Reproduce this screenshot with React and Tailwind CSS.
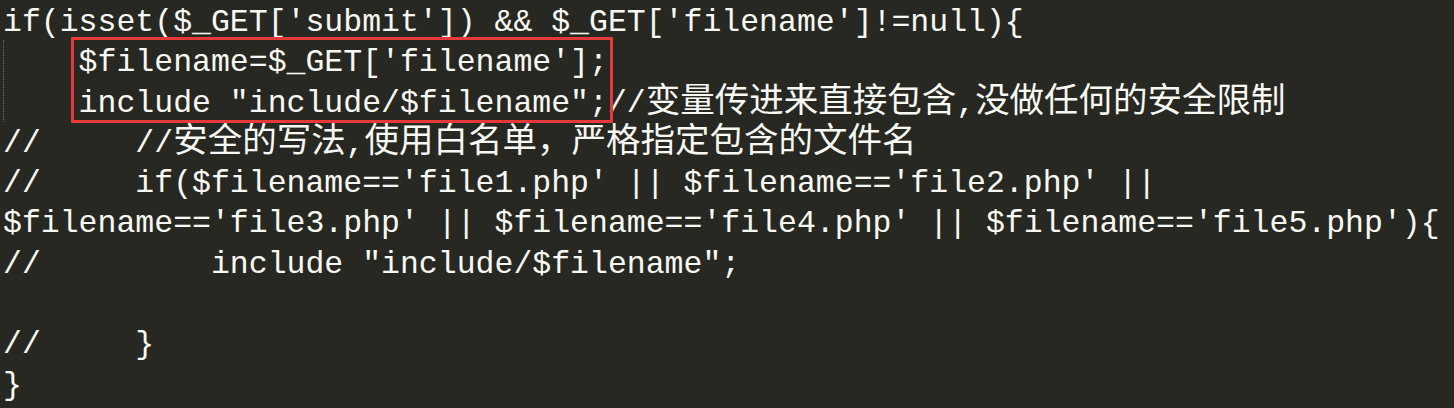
const mono = "font-['Liberation_Mono',monospace] text-[31.5px]"
const cjk = "font-['Noto_Sans_CJK_SC',sans-serif] text-[34.5px] leading-[0px]"

const lines = [
  [{ t: "if(isset($_GET['submit']) && $_GET['filename']!=null){" }],
  [{ t: "    $filename=$_GET['filename'];" }],
  [
    { t: '    include "include/$filename";//' },
    { t: '变量传进来直接包含', c: true },
    { t: ',' },
    { t: '没做任何的安全限制', c: true },
  ],
  [
    { t: '//     //' },
    { t: '安全的写法', c: true },
    { t: ',' },
    { t: '使用白名单，严格指定包含的文件名', c: true },
  ],
  [{ t: "//     if($filename=='file1.php' || $filename=='file2.php' ||" }],
  [{ t: "$filename=='file3.php' || $filename=='file4.php' || $filename=='file5.php'){" }],
  [{ t: '//         include "include/$filename";' }],
  [{ t: '' }],
  [{ t: '//     }' }],
  [{ t: '}' }],
]

export default function App() {
  return (
    <div className="w-[1454px] h-[408px] bg-[#272822] overflow-hidden">
      <div className={`relative pl-[3px] pt-[3px] text-[#f8f8f2] ${mono}`}>
        {lines.map((parts, i) => (
          <div key={i} className="h-[40.3px] leading-[40.3px] whitespace-pre">
            {parts.map((p, j) =>
              p.c ? (
                <span key={j} className={cjk}>{p.t}</span>
              ) : (
                <span key={j}>{p.t}</span>
              )
            )}
          </div>
        ))}

        {/* indent guide */}
        <div className="absolute left-[3px] top-[40px] h-[82px] border-l border-dotted border-[#6b6b66]" />

        {/* highlight box */}
        <div className="absolute left-[71px] top-[37px] w-[542px] h-[86px] border-[3px] border-[#e8393a]" />
      </div>
    </div>
  )
}
